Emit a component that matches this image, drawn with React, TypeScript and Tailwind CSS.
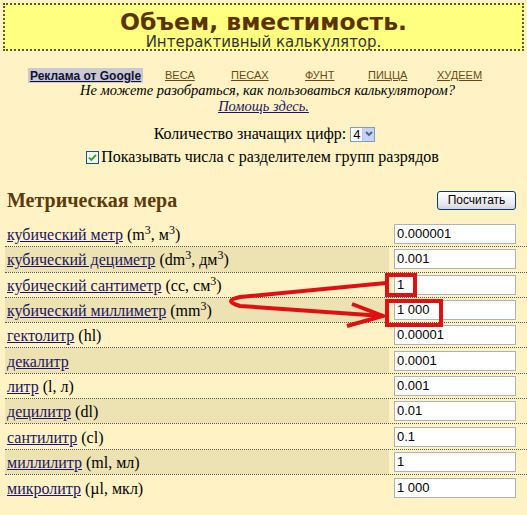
import React from "react";

const rows: { name: string; extra: React.ReactNode; value: string }[] = [
  { name: "кубический метр", extra: <>(m<sup>3</sup>, м<sup>3</sup>)</>, value: "0.000001" },
  { name: "кубический дециметр", extra: <>(dm<sup>3</sup>, дм<sup>3</sup>)</>, value: "0.001" },
  { name: "кубический сантиметр", extra: <>(cc, см<sup>3</sup>)</>, value: "1" },
  { name: "кубический миллиметр", extra: <>(mm<sup>3</sup>)</>, value: "1 000" },
  { name: "гектолитр", extra: <>(hl)</>, value: "0.00001" },
  { name: "декалитр", extra: null, value: "0.0001" },
  { name: "литр", extra: <>(l, л)</>, value: "0.001" },
  { name: "децилитр", extra: <>(dl)</>, value: "0.01" },
  { name: "сантилитр", extra: <>(cl)</>, value: "0.1" },
  { name: "миллилитр", extra: <>(ml, мл)</>, value: "1" },
  { name: "микролитр", extra: <>(µl, мкл)</>, value: "1 000" },
];

export default function App() {
  return (
    <div className="relative w-[527px] h-[515px] overflow-hidden bg-[#fff3c6] text-black" style={{ fontFamily: '"Liberation Serif", serif' }}>
      {/* header */}
      <div className="mx-[3px] mt-[3px] h-[48px] border-2 border-dotted border-[#5a5a40] bg-[#ffff80] flex flex-col items-center">
        <div className="pt-[5px] leading-[24px] h-[30px] text-[23.5px] font-bold text-[#5c3300]" style={{ fontFamily: '"DejaVu Sans", sans-serif' }}>
          Объем, вместимость.
        </div>
        <div className="leading-[14px] h-[14px] text-[15px] text-[#333]" style={{ fontFamily: '"DejaVu Sans", sans-serif' }}>
          Интерактивный калькулятор.
        </div>
      </div>

      {/* links row */}
      <div className="mt-[17px] h-[15px] flex items-center text-[11px]" style={{ fontFamily: '"Liberation Sans", Arial, sans-serif' }}>
        <div className="ml-[28px] w-[115px] h-[15px] bg-[#c9c9d3] flex items-center justify-center">
          <span className="font-bold text-[12px] text-[#111133] underline">Реклама от Google</span>
        </div>
        <div className="ml-[22px] w-[66px]"><span className="underline text-[#6b4a10]">ВЕСА</span></div>
        <div className="w-[74px]"><span className="underline text-[#6b4a10]">ПЕСАХ</span></div>
        <div className="w-[63px]"><span className="underline text-[#6b4a10]">ФУНТ</span></div>
        <div className="w-[69px]"><span className="underline text-[#6b4a10]">ПИЦЦА</span></div>
        <div><span className="underline text-[#6b4a10]">ХУДЕЕМ</span></div>
      </div>

      <div className="leading-[14px] h-[14px] text-[14.5px] italic text-center pl-[8px]">
        Не можете разобраться, как пользоваться калькулятором?
      </div>
      <div className="mt-[2px] leading-[14px] h-[14px] text-[14.5px] italic text-center">
        <span className="underline text-[#1b1464]">Помощь здесь.</span>
      </div>

      {/* significant digits */}
      <div className="mt-[12px] h-[18px] flex items-center justify-center text-[16px] pl-[2px]">
        <span>Количество значащих цифр:</span>
        <div className="ml-[4px] h-[15px] w-[25px] border border-[#7f9db9] bg-white flex items-stretch">
          <span className="flex-1 text-[13px] leading-[13px] pl-[2px]" style={{ fontFamily: '"Liberation Sans", sans-serif' }}>4</span>
          <div className="w-[12px] bg-[#c5d3f6] border-l border-[#b9c9ef] flex items-center justify-center">
            <svg width="8" height="6" viewBox="0 0 8 6">
              <path d="M1 1 L4 4 L7 1" stroke="#4d6185" strokeWidth="1.8" fill="none" />
            </svg>
          </div>
        </div>
      </div>

      <div className="mt-[5px] h-[18px] flex items-center justify-center text-[16px] pr-[2px]">
        <svg width="13" height="13" viewBox="0 0 13 13" className="mr-[2px]">
          <rect x="0.5" y="0.5" width="12" height="12" fill="#f4f4ee" stroke="#1c5180" />
          <path d="M3 6.5 L5.3 9 L10 3.8" stroke="#21a121" strokeWidth="1.8" fill="none" />
        </svg>
        <span>Показывать числа с разделителем групп разрядов</span>
      </div>

      {/* heading */}
      <div className="mt-[24px] h-[20px] flex items-center justify-between pl-[7px] pr-[11px]">
        <span className="text-[20px] font-bold text-[#5c3a0a] leading-[20px]">Метрическая мера</span>
        <button
          className="w-[79px] h-[19px] rounded-[3px] border border-[#003c74] text-[12px] leading-[15px] text-black"
          style={{ fontFamily: '"Liberation Sans", sans-serif', background: "linear-gradient(#ffffff, #ececf0 60%, #d6d5de)" }}
        >
          Посчитать
        </button>
      </div>

      {/* rows */}
      <div className="mt-[12px] pl-[5px]">
        {rows.map((r, i) => (
          <div
            key={i}
            className={
              "h-[25.3px] flex items-center " +
              (i < rows.length - 1 ? "border-b border-dotted border-[#555]" : "")
            }
          >
            <div className={"h-full flex-1 flex items-center text-[16px] pl-[2px] pt-[2px] " + (i % 2 === 1 ? "bg-[#ede2b2]" : "")}>
              <span className="underline text-[#1b1464]">{r.name}</span>
              {r.extra ? <span className="ml-[4px]">{r.extra}</span> : null}
            </div>
            <div className="w-[138px] pl-[5px] flex items-center">
              <div
                className="w-[122px] h-[20px] bg-white border border-[#a8b3bd] text-[13px] leading-[18px] pl-[2px]"
                style={{ fontFamily: '"Liberation Sans", sans-serif' }}
              >
                {r.value}
              </div>
            </div>
          </div>
        ))}
      </div>

      {/* red annotation */}
      <svg className="absolute left-0 top-0 pointer-events-none" width="527" height="515" viewBox="0 0 527 515">
        <rect x="387" y="275" width="28" height="20" fill="none" stroke="#e01010" strokeWidth="4" />
        <rect x="387" y="301" width="54" height="24" fill="none" stroke="#e01010" strokeWidth="4" />
        <path d="M386 283 L240 297 Q222 301 240 306 L383 316" fill="none" stroke="#e01010" strokeWidth="4" strokeLinejoin="round" />
        <path d="M352 304 L383 316 L347 326" fill="none" stroke="#e01010" strokeWidth="4" />
      </svg>
    </div>
  );
}
